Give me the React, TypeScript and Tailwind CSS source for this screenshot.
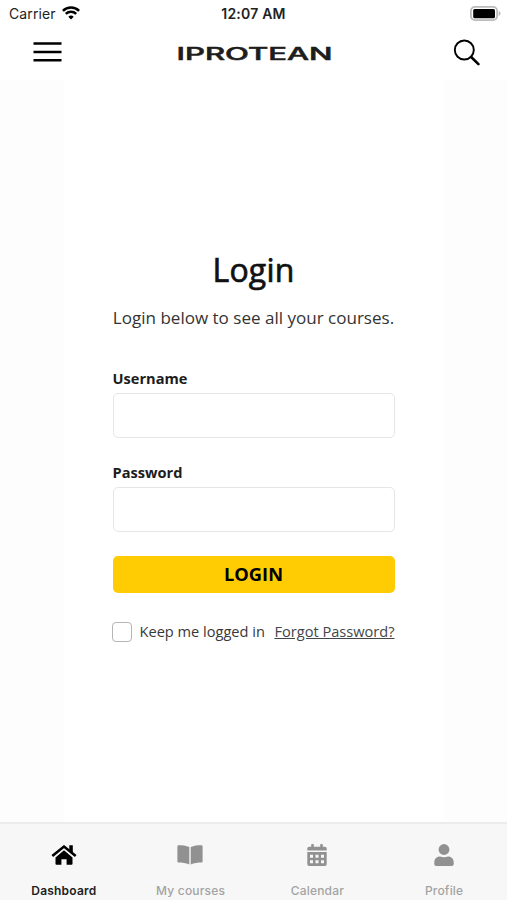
import { ReactNode } from 'react';

interface FieldProps {
  id: string;
  label: string;
  type: string;
}

const fields: FieldProps[] = [
  { id: 'username', label: 'Username', type: 'text' },
  { id: 'password', label: 'Password', type: 'password' },
];

interface Tab {
  label: string;
  icon: ReactNode;
  active?: boolean;
}

const tabs: Tab[] = [
  { label: 'Dashboard', icon: <HomeIcon />, active: true },
  { label: 'My courses', icon: <BookIcon /> },
  { label: 'Calendar', icon: <CalendarIcon /> },
  { label: 'Profile', icon: <ProfileIcon /> },
];

function HomeIcon() {
  return (
    <svg viewBox="0 0 26 20" className="ml-px h-5 w-[26px]" fill="currentColor">
      <path d="M1.300 11.100 13 1.600l11.700 9.500" fill="none" stroke="currentColor" strokeWidth="2.600" />
      <path d="M18.300.3h3.500v8l-3.500-3Z" />
      <path d="M13 5.300 4.500 12.400v6.400q0 1 1 1h4.900v-5.600h5.200v5.600h4.900q1 0 1-1v-6.400Z" />
    </svg>
  );
}

function BookIcon() {
  return (
    <svg viewBox="0 0 26 20" className="h-5 w-[26px]" fill="currentColor">
      <path d="M1.6.3C5.500 .3 9 .7 12.300 2v17.400C9 18.100 5 17.500 1.400 17.500Q.4 17.400 .4 16.400V1.400Q.4.400 1.600.300Z" />
      <path d="M24.400.3C20.500.3 17 .7 13.700 2v17.400c3.300-1.300 7.300-1.900 10.900-1.900q1-.1 1-1.100V1.400q0-1-1.200-1.100Z" />
    </svg>
  );
}

function CalendarIcon() {
  return (
    <svg viewBox="0 0 20 22" className="h-[22px] w-5" fill="currentColor">
      <path d="M4.200 2.700V.7q0-.6.7-.6h1.200q.7 0 .7.600v2h6.400v-2q0-.6.7-.6h1.200q.7 0 .7.600v2h2q1.900 0 1.900 1.900v2H.3v-2q0-1.900 1.900-1.900Z" />
      <path
        fillRule="evenodd"
        d="M.3 8h19.400v12q0 1.900-1.900 1.900H2.200Q.3 21.900.3 20ZM3 10.700v3h3v-3ZM8.500 10.700v3h3v-3ZM14 10.700v3h3v-3ZM3 16.200v3h3v-3ZM8.500 16.200v3h3v-3ZM14 16.200v3h3v-3Z"
      />
    </svg>
  );
}

function ProfileIcon() {
  return (
    <svg viewBox="0 0 20 22" className="h-[22px] w-5" fill="currentColor">
      <circle cx="10" cy="5.500" r="5.400" />
      <path d="M6 12.400c2.600 1 5.400 1 8 0 3.300 0 5.700 2.400 5.700 5.600v2q0 1.900-1.900 1.900H2.200Q.3 21.900.3 20v-2c0-3.200 2.400-5.600 5.700-5.600Z" />
    </svg>
  );
}

function StatusBar() {
  return (
    <div className="grid h-7 grid-cols-3 items-center font-['Inter',sans-serif] text-[14px] leading-7 text-[#222]">
      <div className="flex items-center gap-[6px] pl-[9px]">
        <span className="tracking-[0.1px]">Carrier</span>
        <svg viewBox="0 0 18 14" className="mb-0.5 h-[14px] w-[18px]" fill="none" stroke="#000" strokeWidth="2.500">
          <path d="M.9 4.800a11.500 11.500 0 0 1 16.200 0" />
          <path d="M3.800 7.900a7.400 7.400 0 0 1 10.400 0" />
          <path d="M9 13.500 6.300 10.700a3.900 3.900 0 0 1 5.400 0Z" fill="#000" stroke="none" />
        </svg>
      </div>
      <span className="text-center font-semibold tracking-[0.2px] whitespace-nowrap text-[#222]">12:07 AM</span>
      <div className="flex justify-end pr-[6px]">
        <svg viewBox="0 0 31 15" className="mb-px h-[15px] w-[31px]">
          <rect x="0.900" y="0.900" width="26.200" height="13.200" rx="4" fill="#fff" stroke="#bbb" strokeWidth="1.800" />
          <rect x="3.200" y="3" width="21.800" height="9.200" rx="1.500" fill="#000" />
          <path d="M28.600 5v5q2-.8 2-2.500T28.600 5Z" fill="#bbb" />
        </svg>
      </div>
    </div>
  );
}

function Header() {
  return (
    <header className="grid h-[52px] grid-cols-3 items-start pr-[26px] pl-[33px]">
      <button aria-label="Menu" className="mt-[13px] w-[29px]">
        <svg viewBox="0 0 29 22" className="h-[22px] w-[29px]" stroke="#000" strokeWidth="2.500">
          <path d="M.5 2.500h28M.5 10.900h28M.5 19.300h28" />
        </svg>
      </button>
      <svg viewBox="0 0 156 20" className="mt-4 -ml-[5px] h-5 w-[156px]">
        <text
          x="-0.500"
          y="15.800"
          textLength="156"
          lengthAdjust="spacingAndGlyphs"
          strokeWidth="0.500"
          className="fill-[#1d1d1b] stroke-[#1d1d1b] font-['Inter',sans-serif] text-[17px] font-medium"
        >
          IPROTEAN
        </text>
      </svg>
      <button aria-label="Search" className="mt-[10px] justify-self-end">
        <svg viewBox="0 0 28 28" className="h-7 w-7" fill="none" stroke="#000">
          <circle cx="11.300" cy="12" r="9.500" strokeWidth="1.900" />
          <path d="m18.200 19 7.200 7.200" strokeWidth="2.600" strokeLinecap="round" />
        </svg>
      </button>
    </header>
  );
}

function Field({ id, label, type }: FieldProps) {
  return (
    <div className="mb-6">
      <label htmlFor={id} className="block h-[25px] text-[14.600px] leading-5 font-bold text-[#1c1c1c]">
        {label}
      </label>
      <input
        id={id}
        type={type}
        className="block h-[45px] w-full rounded-[5px] border border-[#e6e6e6] bg-white px-3 outline-none"
      />
    </div>
  );
}

function LoginForm() {
  return (
    <form className="w-[282px] pt-[168px]">
      <h1 className="text-center text-[32px] leading-[44px] font-normal tracking-[0.2px] text-[#111] [-webkit-text-stroke:0.7px_#111]">
        Login
      </h1>
      <p className="mt-[14px] mb-[38px] text-center text-[17.050px] leading-6 whitespace-nowrap text-[#333]">
        Login below to see all your courses.
      </p>
      {fields.map(field => (
        <Field key={field.id} {...field} />
      ))}
      <button
        type="button"
        className="block h-[37px] w-full rounded-[5px] bg-[#ffcc04] pb-px text-[18.300px] font-bold text-black"
      >
        LOGIN
      </button>
      <div className="mt-[29px] flex h-5 items-center justify-between text-[14.600px] leading-5 whitespace-nowrap text-[#383838]">
        <label className="-ml-px flex items-center gap-2">
          <input type="checkbox" className="h-5 w-5 appearance-none rounded-[4px] border border-[#b5b5b5] bg-white" />
          <span className="pb-[3px]">Keep me logged in</span>
        </label>
        <a href="#" className="pb-[3px] text-[#42464a] underline">
          Forgot Password?
        </a>
      </div>
    </form>
  );
}

function TabBar() {
  return (
    <nav className="grid h-[78px] grid-cols-4 border-t-2 border-[#ececec] bg-[#f7f7f7] font-['Inter',sans-serif]">
      {tabs.map(({ label, icon, active }) => (
        <a
          key={label}
          href="#"
          className={`flex flex-col items-center ${active ? 'text-black' : 'text-[#919191]'}`}
        >
          <span className="mt-[17px] flex h-7 items-center">{icon}</span>
          <span
            className={`mt-[14px] pl-px text-[12px] leading-4 tracking-[0.2px] ${active ? 'font-semibold text-[#222]' : 'font-medium text-[#a3a3a3]'}`}
          >
            {label}
          </span>
        </a>
      ))}
    </nav>
  );
}

export default function App() {
  return (
    <div className="flex h-[900px] w-[507px] flex-col overflow-hidden bg-white font-['Open_Sans',sans-serif]">
      <StatusBar />
      <Header />
      <main className="flex flex-1 justify-center bg-[#fdfdfd]">
        <div className="flex w-[380px] justify-center bg-white">
          <LoginForm />
        </div>
      </main>
      <TabBar />
    </div>
  );
}
